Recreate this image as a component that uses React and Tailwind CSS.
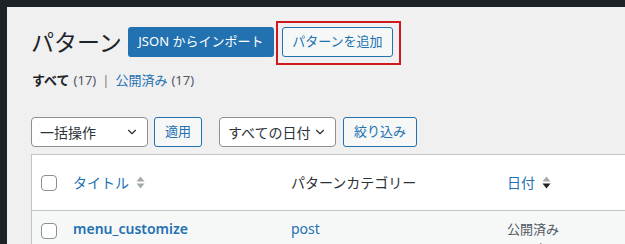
import { ChevronDown } from 'lucide-react';

const font = { fontFamily: '"Noto Sans", "Noto Sans CJK JP", sans-serif' };

function SortIcon({ down = false }) {
    return (
        <svg width="9" height="15" viewBox="0 0 9 15" className="ml-[7px]">
            <path d="M0.5 6.5 L4.5 1.5 L8.5 6.5 Z" fill="#a7aaad" />
            <path d="M0.5 8.5 L4.5 13.5 L8.5 8.5 Z" fill={down ? '#1d2327' : '#a7aaad'} />
        </svg>
    );
}

function Checkbox() {
    return <div className="w-[16px] h-[16px] rounded-[4px] border border-[#8c8f94] bg-white shrink-0" />;
}

function Select({ label, width }) {
    return (
        <div className={`flex items-center justify-between h-[30px] ${width} rounded-[4px] border border-[#8c8f94] bg-white pl-[8px] pr-[8px] text-[14px] text-[#2c3338]`}>
            <span>{label}</span>
            <ChevronDown className="w-[14px] h-[14px] text-[#2c3338]" strokeWidth={2} />
        </div>
    );
}

function SecondaryButton({ label, width }) {
    return (
        <div className={`flex items-center justify-center h-[30px] ${width} rounded-[3px] border border-[#2271b1] bg-[#f6f7f7] text-[13px] text-[#2271b1]`}>
            {label}
        </div>
    );
}

export default function App() {
    return (
        <div className="w-[625px] h-[244px] overflow-hidden bg-[#1d2327] pl-[7px] pt-[7px]" style={font}>
            <div className="h-full bg-[#f0f0f1] pl-[24px] pt-[20px] overflow-hidden">
                <div className="flex items-center h-[30px]">
                    <h1 className="text-[23px] leading-[30px] text-[#1d2327] mr-[6px]">パターン</h1>
                    <div className="flex items-center justify-center h-[30px] w-[146px] rounded-[3px] bg-[#2271b1] text-[13px] text-white">
                        JSON からインポート
                    </div>
                    <div className="ml-[2px] -mt-[6px] -mb-[8px] self-start border-2 border-[#d0191f] pt-[4px] pb-[6px] pl-[4px] pr-[6px]">
                        <SecondaryButton label="パターンを追加" width="w-[111px]" />
                    </div>
                </div>

                <div className="mt-[14px] flex items-center h-[20px] text-[13px] pl-[1px]">
                    <span className="font-bold text-[#1d2327]">すべて</span>
                    <span className="ml-[4px] text-[#50575e]">(17)</span>
                    <span className="mx-[6px] text-[#787c82]">|</span>
                    <span className="text-[#2271b1]">公開済み</span>
                    <span className="ml-[4px] text-[#50575e]">(17)</span>
                </div>

                <div className="mt-[26px] flex items-center h-[30px]">
                    <Select label="一括操作" width="w-[117px]" />
                    <div className="ml-[6px]">
                        <SecondaryButton label="適用" width="w-[48px]" />
                    </div>
                    <div className="ml-[17px]">
                        <Select label="すべての日付" width="w-[117px]" />
                    </div>
                    <div className="ml-[7px]">
                        <SecondaryButton label="絞り込み" width="w-[74px]" />
                    </div>
                </div>

                <div className="mt-[7px] w-[640px] shrink-0 border-l border-t border-[#c3c4c7] bg-white">
                    <div className="flex items-center h-[56px] border-b border-[#c3c4c7] text-[14px]">
                        <div className="w-[41px] pl-[9px]">
                            <Checkbox />
                        </div>
                        <div className="w-[218px] flex items-center text-[#2271b1]">
                            タイトル
                            <SortIcon />
                        </div>
                        <div className="w-[216px] text-[#2c3338]">パターンカテゴリー</div>
                        <div className="flex items-center text-[#2271b1]">
                            日付
                            <SortIcon down />
                        </div>
                    </div>
                    <div className="flex items-start bg-[#f6f7f7] pt-[8px] h-[60px] text-[14px] leading-[20px]">
                        <div className="w-[41px] pl-[9px] pt-[4px]">
                            <Checkbox />
                        </div>
                        <div className="w-[218px] font-semibold text-[#2271b1]">menu_customize</div>
                        <div className="w-[216px] text-[#2271b1]">post</div>
                        <div className="text-[#50575e] text-[13px]">
                            <div>公開済み</div>
                            <div>2024年3月15日 10:30 AM</div>
                        </div>
                    </div>
                </div>
            </div>
        </div>
    );
}
